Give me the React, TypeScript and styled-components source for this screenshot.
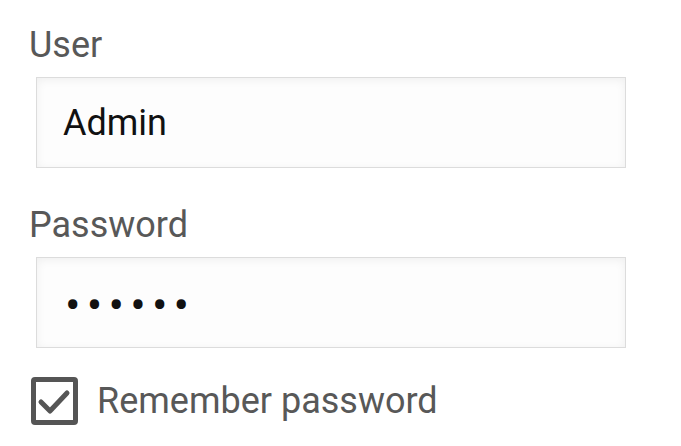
import React from "react";
import styled, { createGlobalStyle } from "styled-components";

const Global = createGlobalStyle`
  html, body { margin: 0; padding: 0; background: #ffffff; }
  body { font-family: Roboto, "Noto Sans", sans-serif; }
`;

const Form = styled.form`
  display: flex;
  flex-direction: column;
  padding: 24px 0 0 29px;
  width: 597px;
`;

const Field = styled.div`
  display: flex;
  flex-direction: column;
  gap: 11px;
  margin-bottom: 36px;
`;

const Label = styled.label`
  font-size: 36px;
  line-height: 42px;
  color: #585858;
`;

const Input = styled.input<{ $masked?: boolean }>`
  box-sizing: border-box;
  margin-left: 7px;
  width: 590px;
  height: 91px;
  padding: ${(p) => (p.$masked ? "5px 0 0 28px" : "0 0 0 26px")};
  border: 1px solid #dcdcdc;
  border-radius: 0;
  background: #fdfdfd;
  box-shadow: inset 0 2px 10px rgba(0, 0, 0, 0.06);
  font-family: Roboto, "Noto Sans", sans-serif;
  font-size: ${(p) => (p.$masked ? "46px" : "36px")};
  color: #111111;
  outline: none;
  letter-spacing: ${(p) => (p.$masked ? "6.2px" : "normal")};
`;

const CheckRow = styled.label`
  display: flex;
  align-items: center;
  gap: 19px;
  margin-top: -7px;
  margin-left: 2px;
  font-size: 36px;
  line-height: 42px;
  color: #585858;
`;

const Box = styled.span`
  box-sizing: border-box;
  width: 47px;
  height: 48px;
  border: 5px solid #555555;
  border-radius: 4px;
  display: flex;
`;

export default function App() {
  return (
    <>
      <Global />
      <Form onSubmit={(e) => e.preventDefault()}>
        <Field>
          <Label htmlFor="user">User</Label>
          <Input id="user" type="text" defaultValue="Admin" readOnly />
        </Field>
        <Field>
          <Label htmlFor="pw">Password</Label>
          <Input id="pw" type="password" defaultValue="secret" $masked readOnly />
        </Field>
        <CheckRow>
          <Box>
            <svg width="37" height="38" viewBox="0 0 37 38">
              <path d="M5 20 L14 29 L31 11" fill="none" stroke="#555555" strokeWidth="5" strokeLinecap="round" strokeLinejoin="round" />
            </svg>
          </Box>
          Remember password
        </CheckRow>
      </Form>
    </>
  );
}
